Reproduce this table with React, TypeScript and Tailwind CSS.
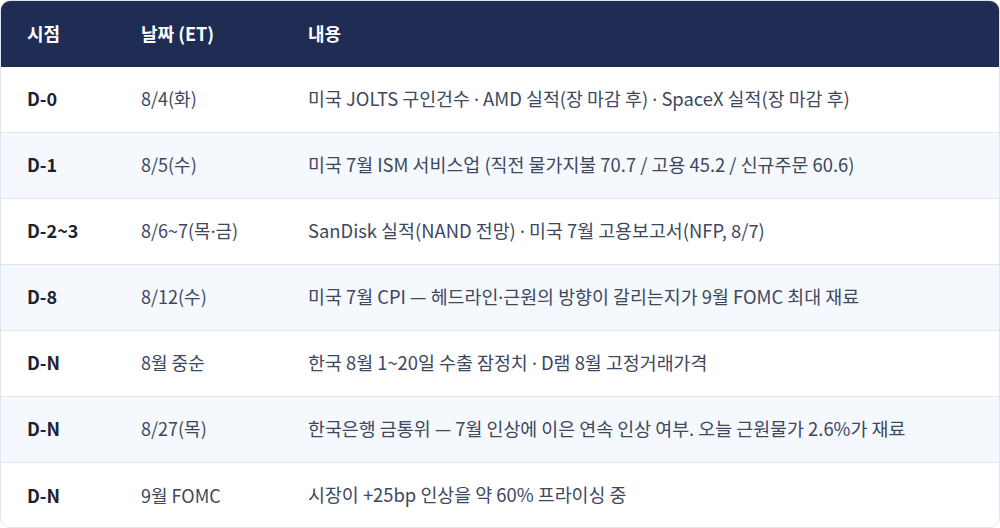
const rows = [
  { when: "D-0", date: "8/4(화)", body: "미국 JOLTS 구인건수 · AMD 실적(장 마감 후) · SpaceX 실적(장 마감 후)" },
  { when: "D-1", date: "8/5(수)", body: "미국 7월 ISM 서비스업 (직전 물가지불 70.7 / 고용 45.2 / 신규주문 60.6)" },
  { when: "D-2~3", date: "8/6~7(목·금)", body: "SanDisk 실적(NAND 전망) · 미국 7월 고용보고서(NFP, 8/7)" },
  { when: "D-8", date: "8/12(수)", body: "미국 7월 CPI — 헤드라인·근원의 방향이 갈리는지가 9월 FOMC 최대 재료" },
  { when: "D-N", date: "8월 중순", body: "한국 8월 1~20일 수출 잠정치 · D램 8월 고정거래가격" },
  { when: "D-N", date: "8/27(목)", body: "한국은행 금통위 — 7월 인상에 이은 연속 인상 여부. 오늘 근원물가 2.6%가 재료" },
  { when: "D-N", date: "9월 FOMC", body: "시장이 +25bp 인상을 약 60% 프라이싱 중" },
];

// the CJK font draws "·" full width; the original uses a narrow dot
const Dotted = ({ text }: { text: string }) => {
  const parts = text.split("·");
  return (
    <>
      {parts.map((p, i) => (
        <span key={i}>
          {i > 0 && <span className="font-['Noto_Sans',sans-serif]">·</span>}
          {p}
        </span>
      ))}
    </>
  );
};

export default function App() {
  return (
    <div className="w-[1000px] h-[528px] bg-white font-['Noto_Sans_CJK_KR',sans-serif]">
      <div className="h-full rounded-[10px] border border-[#e1e6ee] overflow-hidden">
        <div className="flex h-[66px] items-center pb-[2px] bg-[#1f2c54] text-white font-bold text-[18px] px-[26px]">
          <div className="w-[114px]">시점</div>
          <div className="w-[167px]">날짜 (ET)</div>
          <div>내용</div>
        </div>
        {rows.map((r, i) => (
          <div
            key={i}
            className={`flex h-[66px] items-center pb-[2px] px-[26px] text-[18px] ${
              i % 2 === 1 ? "bg-[#f5f8fd]" : "bg-white"
            } ${i < rows.length - 1 ? "border-b border-[#e1e6ee]" : ""}`}
          >
            <div className="w-[114px] font-bold text-[#1a2233]">{r.when}</div>
            <div className="w-[167px] text-[#3d4860]">
              <Dotted text={r.date} />
            </div>
            <div className="text-[18.4px] text-[#3d4860]">
              <Dotted text={r.body} />
            </div>
          </div>
        ))}
      </div>
    </div>
  );
}
